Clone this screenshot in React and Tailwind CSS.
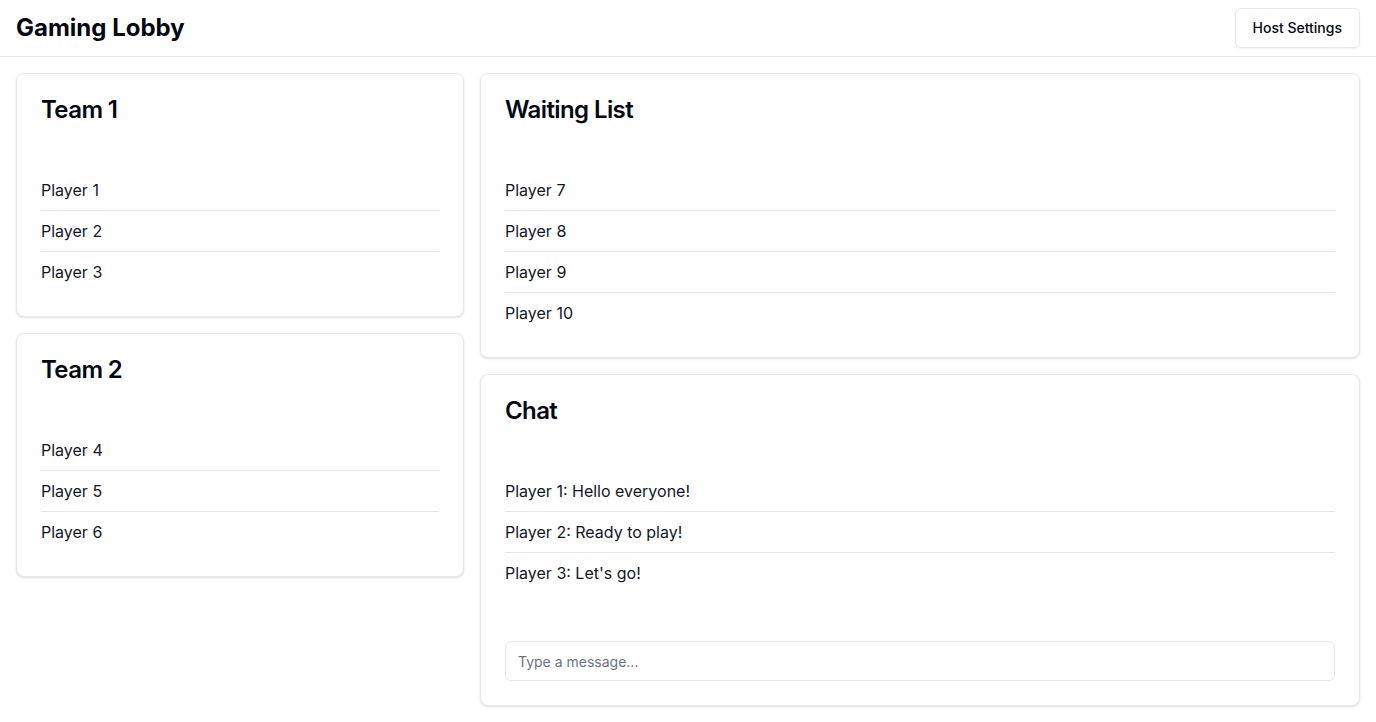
import React from 'react';

const teams = [
  { name: 'Team 1', players: ['Player 1', 'Player 2', 'Player 3'] },
  { name: 'Team 2', players: ['Player 4', 'Player 5', 'Player 6'] },
];

const waiting = ['Player 7', 'Player 8', 'Player 9', 'Player 10'];

const messages = [
  'Player 1: Hello everyone!',
  'Player 2: Ready to play!',
  "Player 3: Let's go!",
];

const Card = ({ title, children }) => (
  <div className="rounded-lg border border-gray-200 bg-white shadow-sm">
    <div className="flex flex-col p-6">
      <h3 className="text-2xl font-semibold leading-none tracking-tight text-gray-950">{title}</h3>
    </div>
    <div className="px-6 pb-6 pt-6">{children}</div>
  </div>
);

const List = ({ items }) => (
  <ul className="divide-y divide-gray-200">
    {items.map((item) => (
      <li key={item} className="py-2 text-base text-gray-900">
        {item}
      </li>
    ))}
  </ul>
);

export default function App() {
  return (
    <div className="min-h-screen bg-white font-['Inter',sans-serif] text-gray-950">
      {/* Header */}
      <header className="flex items-center justify-between border-b border-gray-200 px-4 py-2">
        <h1 className="text-2xl font-bold">Gaming Lobby</h1>
        <button className="h-10 rounded-md border border-gray-200 bg-white px-[17px] text-sm font-medium shadow-xs">
          Host Settings
        </button>
      </header>

      <main className="flex gap-4 p-4">
        {/* Teams */}
        <div className="flex w-1/3 flex-col gap-4">
          {teams.map((team) => (
            <Card key={team.name} title={team.name}>
              <List items={team.players} />
            </Card>
          ))}
        </div>

        {/* Waiting list + chat */}
        <div className="flex flex-1 flex-col gap-4">
          <Card title="Waiting List">
            <List items={waiting} />
          </Card>
          <Card title="Chat">
            <List items={messages} />
            <input
              type="text"
              placeholder="Type a message..."
              className="mt-12 block h-10 w-full rounded-md border border-gray-200 bg-white px-3 py-2 text-sm placeholder-gray-500 focus:outline-none"
            />
          </Card>
        </div>
      </main>
    </div>
  );
}
